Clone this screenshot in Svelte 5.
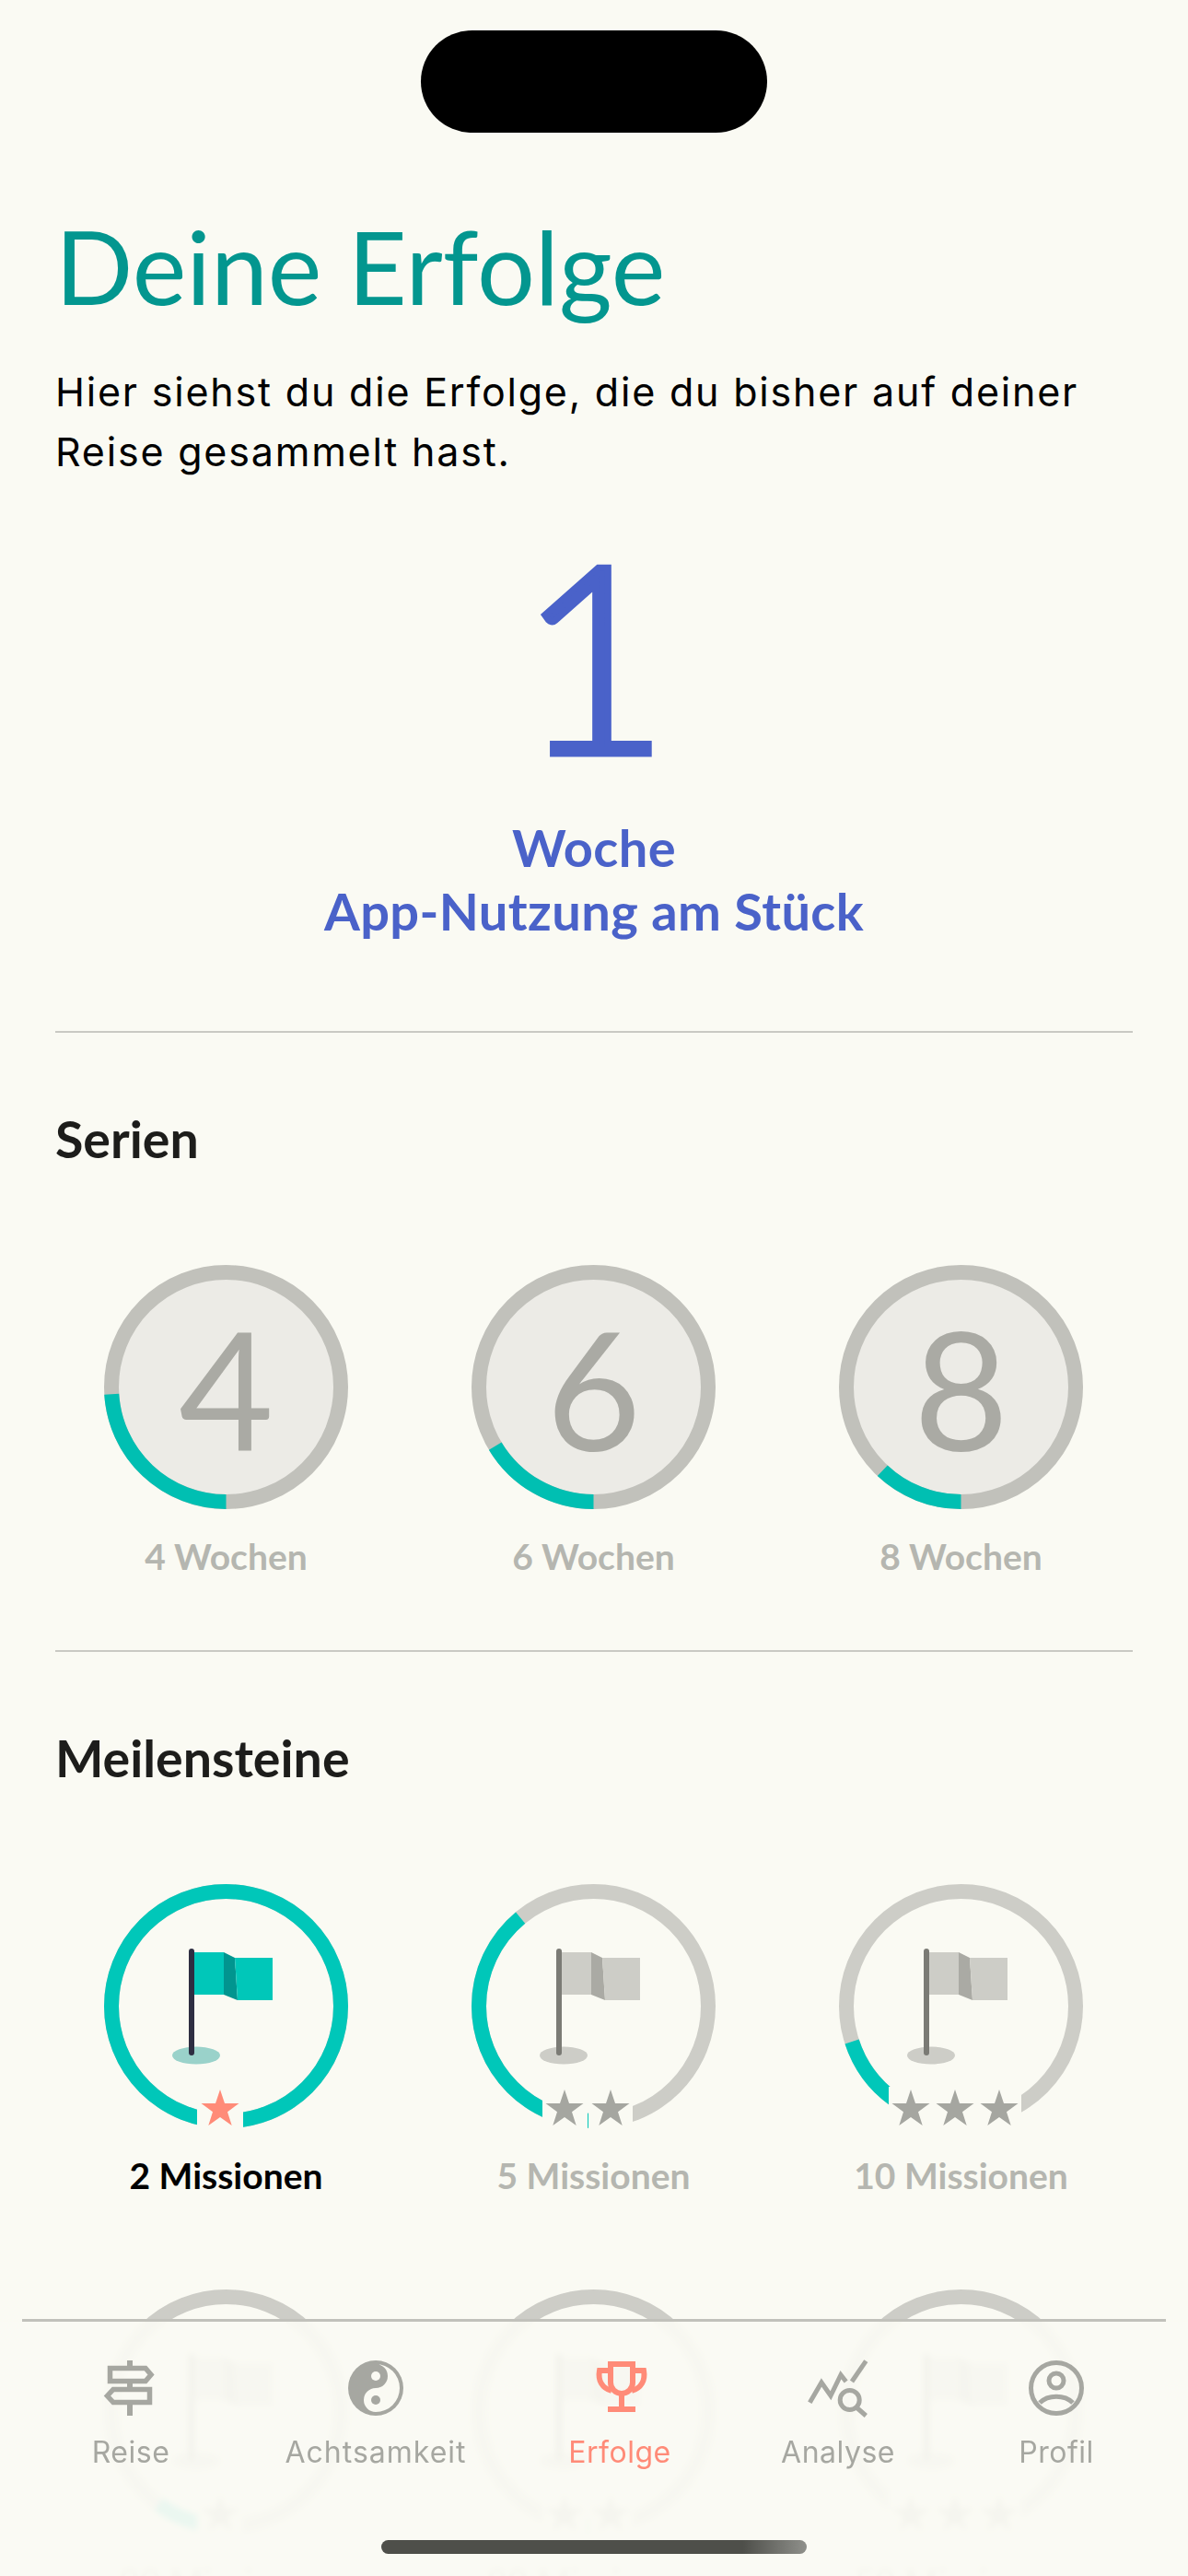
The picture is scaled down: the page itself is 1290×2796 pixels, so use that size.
<script>
  const series = [
    { n: 4, label: '4 Wochen', progress: 24 },
    { n: 6, label: '6 Wochen', progress: 16.4 },
    { n: 8, label: '8 Wochen', progress: 12 }
  ];
  const milestones = [
    { label: '2 Missionen', stars: 1, progress: 100, done: true },
    { label: '5 Missionen', stars: 2, progress: 39 },
    { label: '10 Missionen', stars: 3, progress: 20 },
    { label: '20 Missionen', stars: 1, progress: 10 },
    { label: '30 Missionen', stars: 2, progress: 6.6 },
    { label: '50 Missionen', stars: 3, progress: 4 }
  ];
  const tabs = [
    { id: 'reise', label: 'Reise' },
    { id: 'achtsamkeit', label: 'Achtsamkeit' },
    { id: 'erfolge', label: 'Erfolge', active: true },
    { id: 'analyse', label: 'Analyse' },
    { id: 'profil', label: 'Profil' }
  ];
</script>

{#snippet arc(progress)}
  <circle class="arc" cx="132.5" cy="132.5" r="124.5" pathLength="100"
    stroke-dasharray="{progress} 100" transform="rotate(90 132.5 132.5)" />
{/snippet}

<div class="screen">
  <div class="island"></div>

  <main>
    <h1>Deine Erfolge</h1>
    <p class="intro">Hier siehst du die Erfolge, die du bisher auf deiner Reise gesammelt hast.</p>

    <div class="streak">
      <div class="streak-number">1</div>
      <div class="streak-label">Woche<br />App-Nutzung am Stück</div>
    </div>

    <hr />
    <h2>Serien</h2>
    <div class="grid series">
      {#each series as s}
        <div class="cell">
          <div class="ring">
            <svg width="265" height="265" viewBox="0 0 265 265">
              <circle class="track dark" cx="132.5" cy="132.5" r="124.5" />
              {@render arc(s.progress)}
            </svg>
            <span class="digit">{s.n}</span>
          </div>
          <div class="label">{s.label}</div>
        </div>
      {/each}
    </div>

    <hr class="second" />
    <h2>Meilensteine</h2>
    <div class="grid miles">
      {#each milestones as m}
        <div class="cell" class:done={m.done}>
          <div class="ring">
            <svg width="265" height="265" viewBox="0 0 265 265">
              <circle class="track" cx="132.5" cy="132.5" r="124.5" />
              {@render arc(m.progress)}
              <ellipse class="hole" cx="100" cy="186" rx="26" ry="9.5" />
              <path class="panel" d="M98 74H130V120H98Z" />
              <path class="fold" d="M130 74L142 80L145 126L130 120Z" />
              <path class="panel" d="M142 80H183V126H145Z" />
              <line class="pole" x1="95" y1="73" x2="95" y2="183" />
            </svg>
            <div class="stars count-{m.stars}">
              {#each Array(m.stars) as _}
                <span class="star">
                  <svg width="42" height="40" viewBox="0 0 42 40">
                    <polygon points="21,0 26,14.9 41.5,15 29,24.2 33.7,39 21,30 8.3,39 13,24.2 0.5,15 16,14.9" />
                  </svg>
                </span>
              {/each}
            </div>
          </div>
          <div class="label">{m.label}</div>
        </div>
      {/each}
    </div>
  </main>

  <nav>
    {#each tabs as t}
      <div class="tab" class:active={t.active}>
        <svg width="66" height="64" viewBox="0 0 66 64">
          {#if t.id === 'reise'}
            <g fill="none" stroke="currentColor" stroke-width="5.5">
              <path d="M10.5 10.5H49L55 17.5L49 24.5H10.5Z" />
              <path d="M53.5 33.5H14L7.5 40.5L14 47.5H53.5Z" />
              <path stroke-width="6" d="M32 2V8M32 27V31M32 50V62" />
            </g>
          {:else if t.id === 'achtsamkeit'}
            <circle cx="33" cy="32" r="30" fill="currentColor" />
            <path fill="#fafaf3" d="M33 6A26 26 0 0 1 33 58A13 13 0 0 1 33 32A13 13 0 0 0 33 6Z" />
            <circle cx="33" cy="19" r="5" fill="#fafaf3" />
            <circle cx="33" cy="45" r="5" fill="currentColor" />
          {:else if t.id === 'erfolge'}
            <g fill="none" stroke="currentColor" stroke-width="6" transform="translate(2 0)">
              <path d="M21 6H45V26A12 12 0 0 1 21 26Z" />
              <path d="M21 13H9C7 24 12 32 22 35M45 13H57C59 24 54 32 44 35" />
              <path d="M33 38V55M18 55H48" />
            </g>
          {:else if t.id === 'analyse'}
            <g fill="none" stroke="currentColor" stroke-width="5">
              <path d="M2.3 47.7L15 26L25 40.3L36 17.7L41.7 25" />
              <path d="M48 25L63.3 2.7" />
              <circle cx="45.7" cy="45" r="10.5" />
              <path d="M53 53L63.3 62" />
            </g>
          {:else}
            <g fill="none" stroke="currentColor" stroke-width="5">
              <circle cx="33" cy="32" r="27.5" />
              <circle cx="33" cy="24" r="8" />
              <path d="M15 48C24 39 42 39 51 48" />
            </g>
          {/if}
        </svg>
        <span>{t.label}</span>
      </div>
    {/each}
  </nav>

  <div class="home"></div>
</div>

<style>
  :global(body) {
    background: #fafaf3;
  }
  .screen {
    position: relative;
    height: 2796px;
    overflow: hidden;
    background: #fafaf3;
    color: #000;
    font-family: Lato, "Noto Sans", sans-serif;
  }
  .island {
    position: absolute;
    left: 457px;
    top: 33px;
    width: 376px;
    height: 111px;
    border-radius: 56px;
    background: #000;
  }
  main {
    padding: 220px 60px 0;
  }
  h1 {
    margin: 0;
    font-size: 111px;
    line-height: 136px;
    font-weight: 400;
    color: #03968f;
  }
  .intro {
    margin: 37px 0 0;
    font-family: Inter, sans-serif;
    font-size: 43px;
    line-height: 65px;
    letter-spacing: 1.8px;
  }
  .streak {
    margin-top: 20px;
    text-align: center;
    color: #4a62c9;
  }
  .streak-number {
    margin-bottom: 11px;
    font-size: 284px;
    line-height: 331px;
    font-weight: 300;
    -webkit-text-stroke: 7px #4a62c9;
  }
  .streak-label {
    font-size: 56px;
    line-height: 69px;
    font-weight: 700;
    letter-spacing: 0.4px;
  }
  hr {
    margin: 96px 0 0;
    border: 0;
    border-top: 2px solid #c9c9c3;
  }
  hr.second {
    margin-top: 78px;
  }
  h2 {
    margin: 85px 0 0;
    font-size: 55.5px;
    line-height: 60px;
    font-weight: 700;
    color: #1d1d1b;
  }
  .grid {
    display: grid;
    grid-template-columns: repeat(3, 399px);
    margin: 0 -60px;
    padding-left: 46px;
  }
  .series {
    margin-top: 107px;
  }
  .miles {
    margin-top: 107px;
    row-gap: 100px;
  }
  .cell {
    display: flex;
    flex-direction: column;
    align-items: center;
  }
  .ring {
    position: relative;
    width: 265px;
    height: 265px;
  }
  .ring > svg {
    display: block;
  }
  .track {
    fill: none;
    stroke: #cdcdc7;
    stroke-width: 16;
  }
  .track.dark {
    fill: #ecebe6;
    stroke: #c1c1bb;
  }
  .arc {
    fill: none;
    stroke: #00c7b9;
    stroke-width: 16;
  }
  .series .arc {
    stroke: #00bfb2;
  }
  .digit {
    position: absolute;
    inset: 0;
    display: flex;
    align-items: center;
    justify-content: center;
    font-size: 178px;
    font-weight: 400;
    color: #aaaaa4;
  }
  .hole {
    fill: #cdcdc7;
  }
  .panel {
    fill: #cdcdc7;
  }
  .fold {
    fill: #aaaaa4;
  }
  .pole {
    stroke: #7b7b75;
    stroke-width: 6;
    stroke-linecap: round;
  }
  .done .hole {
    fill: #9ad2ca;
  }
  .done .panel {
    fill: #00c7b9;
  }
  .done .fold {
    fill: #01958f;
  }
  .done .pole {
    stroke: #2e2e42;
  }
  .stars {
    position: absolute;
    left: -6.5px;
    right: 6.5px;
    bottom: -5px;
    display: flex;
    justify-content: center;
  }
  .star {
    display: flex;
    justify-content: center;
    align-items: flex-start;
    padding-top: 3px;
    width: 47.7px;
    height: 47px;
    background: #fafaf3;
  }
  .count-1 .star {
    width: 50px;
  }
  .count-2 {
    gap: 1px;
  }
  .count-2 .star {
    width: 48.5px;
  }
  .star polygon {
    fill: #a5a6a0;
  }
  .done .star polygon {
    fill: #ff8b78;
  }
  .label {
    margin-top: 27px;
    font-size: 39px;
    line-height: 48px;
    font-weight: 700;
    color: #b5b6b0;
  }
  .done .label {
    color: #000;
  }
  nav {
    position: absolute;
    left: 24px;
    right: 24px;
    top: 2517px;
    bottom: 0;
    display: grid;
    grid-template-columns: 236px 296px 234px 240px 234px;
    align-items: start;
    border-top: 3px solid #c1c1bb;
    padding-top: 40px;
  }
  nav::before {
    content: "";
    position: absolute;
    inset: 0 -24px;
    background: rgba(250, 250, 243, 0.94);
    backdrop-filter: blur(3px);
  }
  .tab {
    position: relative;
    display: flex;
    flex-direction: column;
    align-items: center;
    color: #a6a7a1;
    font-family: Inter, sans-serif;
    font-size: 32px;
    line-height: 40px;
  }
  .tab svg {
    display: block;
  }
  .tab span {
    margin-top: 18px;
    letter-spacing: 0.5px;
  }
  .tab:nth-child(2) span {
    letter-spacing: 1px;
  }
  .tab.active {
    color: #ff8b78;
  }
  .home {
    position: absolute;
    left: 414px;
    top: 2757px;
    width: 462px;
    height: 15px;
    border-radius: 8px;
    background: linear-gradient(90deg, #4e4f4a 85%, #8f908b);
  }
</style>
